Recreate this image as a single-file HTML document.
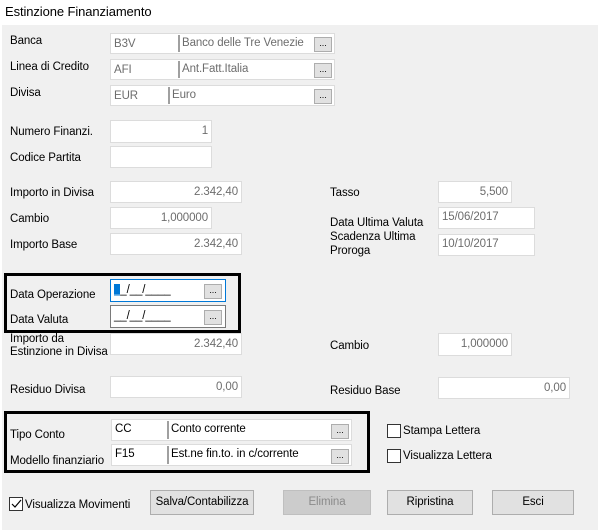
<!DOCTYPE html>
<html><head><meta charset="utf-8"><style>
*{box-sizing:border-box;margin:0;padding:0}
body{width:600px;height:530px;background:#fff;font-family:"Liberation Sans",Arial,sans-serif;font-size:11.5px;letter-spacing:-0.1px;color:#000;position:relative;overflow:hidden}
.panel{position:absolute;left:2px;top:25px;width:596px;height:505px;background:#f0f0f0}
.l{position:absolute;white-space:nowrap;line-height:14px}
.f{position:absolute;background:#fff;border:1px solid #dcdcdc;color:#6d6d6d;line-height:20px;padding:0 3px;white-space:nowrap;overflow:hidden}
.r{text-align:right}
.sep{position:absolute;width:2px;background:#a0a0a0}
.b{position:absolute;width:18px;height:15px;background:#e1e1e1;border:1px solid #adadad;font-size:9px;line-height:10px;text-align:center;color:#000}
.box{position:absolute;border:3px solid #000}
.cb{position:absolute;width:14px;height:14px;border:1px solid #333;background:#fff}
.btn{position:absolute;height:25px;background:#e1e1e1;border:1px solid #adadad;text-align:center;line-height:23px}
.dk{color:#000}
</style></head><body>
<div class="l" style="left:5px;top:4px;font-size:13px;line-height:16px">Estinzione Finanziamento</div>
<div class="panel"></div>

<div class="l" style="left:10px;top:34px">Banca</div>
<div class="f" style="left:110px;top:33px;width:225px;height:21px">B3V</div>
<div class="sep" style="left:178px;top:35px;height:17px"></div>
<div class="l" style="left:182px;top:36px;color:#6d6d6d">Banco delle Tre Venezie</div>
<div class="b" style="left:314px;top:37px">...</div>

<div class="l" style="left:10px;top:60px">Linea di Credito</div>
<div class="f" style="left:110px;top:59px;width:225px;height:21px">AFI</div>
<div class="sep" style="left:178px;top:61px;height:17px"></div>
<div class="l" style="left:182px;top:62px;color:#6d6d6d">Ant.Fatt.Italia</div>
<div class="b" style="left:314px;top:63px">...</div>

<div class="l" style="left:10px;top:86px">Divisa</div>
<div class="f" style="left:110px;top:85px;width:225px;height:21px">EUR</div>
<div class="sep" style="left:168px;top:87px;height:17px"></div>
<div class="l" style="left:172px;top:88px;color:#6d6d6d">Euro</div>
<div class="b" style="left:314px;top:89px">...</div>

<div class="l" style="left:10px;top:125px">Numero Finanzi.</div>
<div class="f r" style="left:110px;top:120px;width:102px;height:23px">1</div>
<div class="l" style="left:10px;top:151px">Codice Partita</div>
<div class="f" style="left:110px;top:146px;width:102px;height:22px"></div>

<div class="l" style="left:10px;top:186px">Importo in Divisa</div>
<div class="f r" style="left:110px;top:181px;width:132px;height:22px">2.342,40</div>
<div class="l" style="left:10px;top:212px">Cambio</div>
<div class="f r" style="left:110px;top:207px;width:102px;height:22px">1,000000</div>
<div class="l" style="left:10px;top:238px">Importo Base</div>
<div class="f r" style="left:110px;top:233px;width:132px;height:22px">2.342,40</div>

<div class="l" style="left:330px;top:186px">Tasso</div>
<div class="f r" style="left:438px;top:181px;width:74px;height:22px">5,500</div>
<div class="l" style="left:330px;top:216px">Data Ultima Valuta</div>
<div class="f" style="left:438px;top:207px;width:97px;height:22px;line-height:18px">15/06/2017</div>
<div class="l" style="left:330px;top:230px">Scadenza Ultima<br>Proroga</div>
<div class="f" style="left:438px;top:234px;width:97px;height:22px;line-height:18px">10/10/2017</div>

<div class="l" style="left:10px;top:333px;line-height:13px">Importo da<br>Estinzione in Divisa</div>
<div class="box" style="left:4px;top:273px;width:237px;height:60px;background:#f0f0f0"></div>
<div class="l" style="left:10px;top:288px">Data Operazione</div>
<div class="f dk" style="left:110px;top:279px;width:116px;height:23px;border-color:#0078d7"><span style="background:#0078d7;color:#fff">_</span>_/__/____</div>
<div class="b" style="left:204px;top:284px">...</div>
<div class="l" style="left:10px;top:313px">Data Valuta</div>
<div class="f dk" style="left:110px;top:305px;width:116px;height:23px;border-color:#7a7a7a">__/__/____</div>
<div class="b" style="left:204px;top:310px">...</div>

<div class="f r" style="left:110px;top:333px;width:132px;height:22px">2.342,40</div>
<div class="l" style="left:330px;top:339px">Cambio</div>
<div class="f r" style="left:438px;top:333px;width:74px;height:23px">1,000000</div>

<div class="l" style="left:10px;top:383px">Residuo Divisa</div>
<div class="f r" style="left:110px;top:376px;width:132px;height:22px">0,00</div>
<div class="l" style="left:330px;top:384px">Residuo Base</div>
<div class="f r" style="left:438px;top:377px;width:132px;height:22px">0,00</div>

<div class="box" style="left:4px;top:411px;width:366px;height:62px"></div>
<div class="l" style="left:10px;top:428px">Tipo Conto</div>
<div class="f dk" style="left:111px;top:419px;width:241px;height:22px;line-height:18px">CC</div>
<div class="sep" style="left:167px;top:421px;height:18px"></div>
<div class="l" style="left:171px;top:422px">Conto corrente</div>
<div class="b" style="left:331px;top:424px">...</div>
<div class="l" style="left:10px;top:454px">Modello finanziario</div>
<div class="f dk" style="left:111px;top:444px;width:241px;height:22px;line-height:18px">F15</div>
<div class="sep" style="left:167px;top:446px;height:18px"></div>
<div class="l" style="left:171px;top:447px">Est.ne fin.to. in c/corrente</div>
<div class="b" style="left:331px;top:449px">...</div>

<div class="cb" style="left:387px;top:424px"></div>
<div class="l" style="left:403px;top:424px">Stampa Lettera</div>
<div class="cb" style="left:387px;top:449px"></div>
<div class="l" style="left:403px;top:449px">Visualizza Lettera</div>

<div class="cb" style="left:9px;top:497px"><svg width="12" height="12" style="position:absolute;left:0;top:0"><path d="M2 6 L5 9 L11 2" fill="none" stroke="#000" stroke-width="1.2"/></svg></div>
<div class="l" style="left:25px;top:498px">Visualizza Movimenti</div>

<div class="btn" style="left:150px;top:490px;width:104px">Salva/Contabilizza</div>
<div class="btn" style="left:283px;top:490px;width:88px;background:#ccc;border-color:#bfbfbf;color:#8a8a8a">Elimina</div>
<div class="btn" style="left:387px;top:490px;width:86px">Ripristina</div>
<div class="btn" style="left:492px;top:490px;width:82px">Esci</div>
</body></html>
